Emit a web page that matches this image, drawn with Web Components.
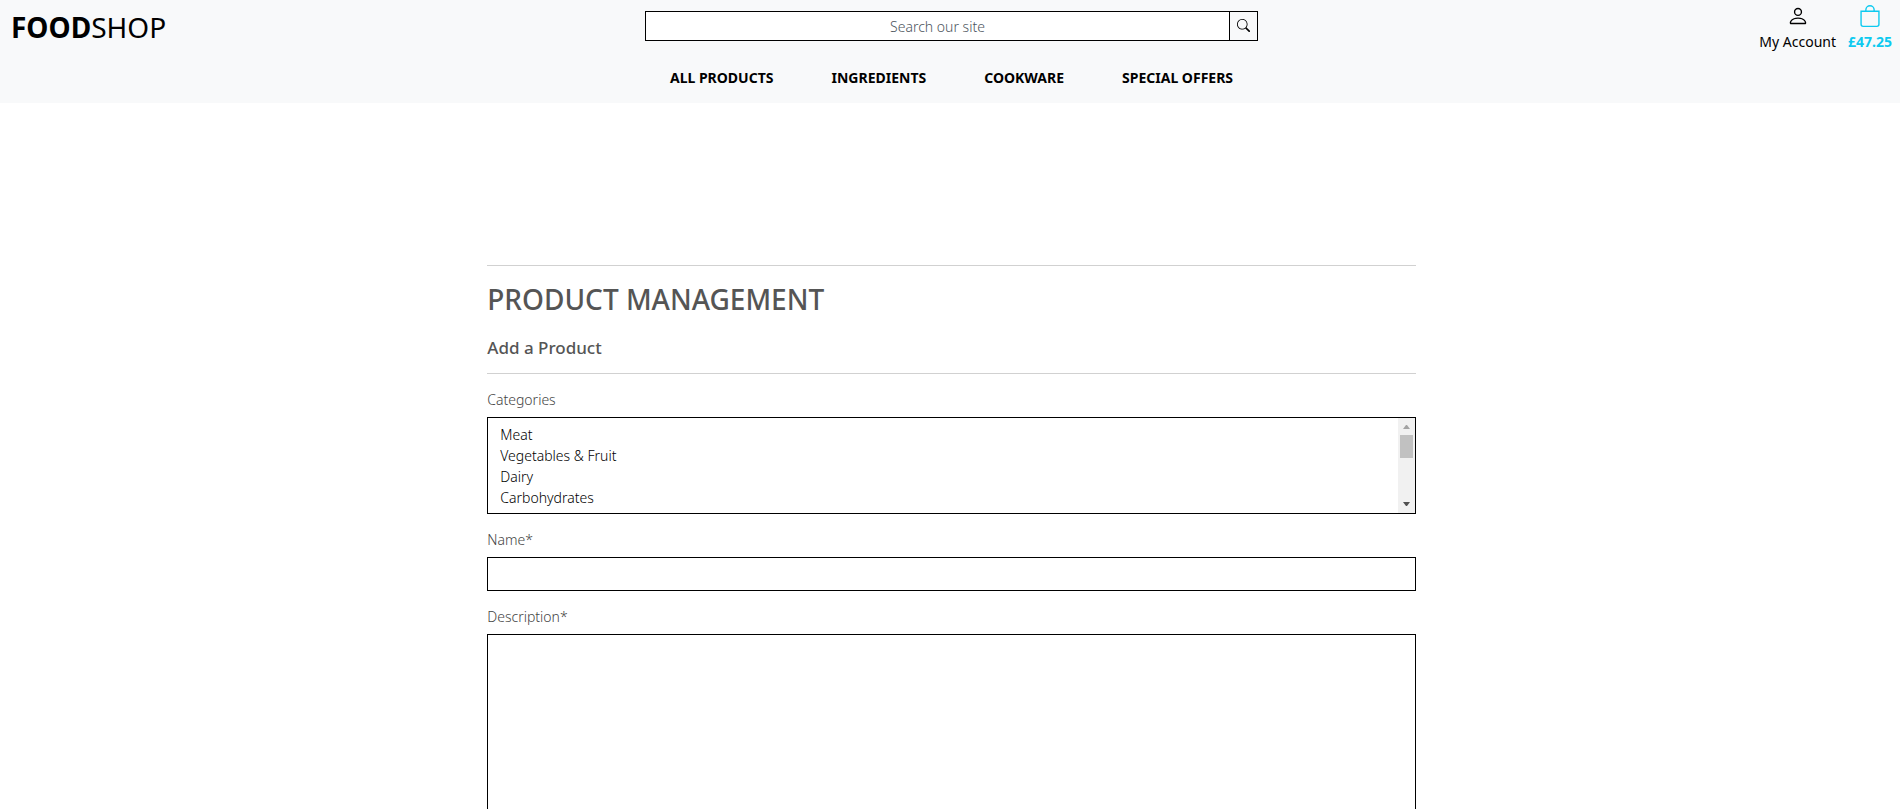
<!DOCTYPE html>
<html lang="en">
<head>
<meta charset="utf-8">
<title>Food Shop</title>
<style>
body { margin: 0; background: #fff; color: #555; font: 14px/21px "Noto Sans", "Open Sans", sans-serif; overflow-x: hidden; }
</style>
</head>
<body>
<site-header></site-header>
<product-page>
  <form-field label="Categories" kind="select"></form-field>
  <form-field label="Name*" kind="text"></form-field>
  <form-field label="Description*" kind="area"></form-field>
</product-page>

<script>
class SiteHeader extends HTMLElement {
  constructor() {
    super();
    this.attachShadow({ mode: "open" }).innerHTML = `
<style>
:host { display: block; background: #f8f9fa; color: #000; padding-bottom: 15px; }
* { box-sizing: border-box; }
a { color: inherit; text-decoration: none; }
.top { display: grid; grid-template-columns: 1fr 613px 1fr; padding: 0 8px 0 11px; height: 53px; }
.logo { font-size: 28px; line-height: 38px; padding-top: 8px; }
form { display: flex; height: 30px; margin-top: 11px; border: 1px solid #000; }
input { flex: 1; min-width: 0; border: 0; border-right: 1px solid #000; padding: 0; font: inherit; font-weight: 300; text-align: center; background: #fff; outline: 0; border-radius: 0; }
input::placeholder { color: #4c555d; opacity: 1; }
button { width: 27px; border: 0; padding: 0 0 2px; background: none; display: grid; place-items: center; }
.links { display: flex; justify-content: flex-end; gap: 12px; }
.links a { display: flex; flex-direction: column; align-items: center; }
.links svg { margin-top: 5px; margin-bottom: 4px; }
.bag { color: #0dcaf0; font-weight: 700; }
svg { display: block; fill: currentColor; }
nav { display: flex; justify-content: center; gap: 58px; padding: 14px 0 0 3px; font-weight: 700; }
</style>
<div class="top">
  <a class="logo" href="#"><b>FOOD</b>SHOP</a>
  <form><input type="text" aria-label="Search our site" placeholder="Search our site">
    <button type="button" aria-label="Search"><svg width="13" height="13" viewBox="0 0 16 16"><path d="M11.742 10.344a6.5 6.5 0 1 0-1.397 1.398h-.001c.03.04.062.078.098.115l3.850 3.850a1 1 0 0 0 1.415-1.414l-3.850-3.850a1.007 1.007 0 0 0-.115-.1zM12 6.5a5.5 5.5 0 1 1-11 0 5.5 5.5 0 0 1 11 0z"/></svg></button>
  </form>
  <div class="links">
    <a href="#"><svg width="22" height="22" viewBox="0 0 16 16"><path d="M8 8a3 3 0 1 0 0-6 3 3 0 0 0 0 6zm2-3a2 2 0 1 1-4 0 2 2 0 0 1 4 0zm4 8c0 1-1 1-1 1H3s-1 0-1-1 1-4 6-4 6 3 6 4zm-1-.004c-.001-.246-.154-.986-.832-1.664C11.516 10.68 10.289 10 8 10c-2.290 0-3.516.680-4.168 1.332-.678.678-.830 1.418-.832 1.664h10z"/></svg>My Account</a>
    <a class="bag" href="#"><svg width="22" height="22" viewBox="0 0 16 16"><path d="M8 1a2.500 2.500 0 0 1 2.500 2.500V4h-5v-.5A2.500 2.500 0 0 1 8 1zm3.500 3v-.5a3.500 3.500 0 1 0-7 0V4H1v10a2 2 0 0 0 2 2h10a2 2 0 0 0 2-2V4h-3.500zM2 5h12v9a1 1 0 0 1-1 1H3a1 1 0 0 1-1-1V5z"/></svg>£47.25</a>
  </div>
</div>
<nav><a href="#">ALL PRODUCTS</a><a href="#">INGREDIENTS</a><a href="#">COOKWARE</a><a href="#">SPECIAL OFFERS</a></nav>`;
  }
}

class ProductPage extends HTMLElement {
  constructor() {
    super();
    this.attachShadow({ mode: "open" }).innerHTML = `
<style>
:host { display: block; padding: 162px 0 0 3px; }
main { width: calc(50% - 20px); margin: 0 auto; }
hr { margin: 0; border: 0; border-top: 1px solid #d1d1d1; }
h1 { margin: 16px 0 8px; font-size: 28px; line-height: 34px; font-weight: 500; }
h2 { margin: 0 0 14px; padding-top: 13px; font-size: 17px; line-height: 22px; font-weight: 500; }
</style>
<main><hr><h1>PRODUCT MANAGEMENT</h1><h2>Add a Product</h2><hr><form><slot></slot></form></main>`;
  }
}

class FormField extends HTMLElement {
  constructor() {
    super();
    this.attachShadow({ mode: "open" });
  }
  connectedCallback() {
    const categories = ["Meat", "Vegetables & Fruit", "Dairy", "Carbohydrates", "Herbs & Spices", "Sauces", "Snacks", "Drinks", "Cookware", "Utensils", "Special Offers"];
    const controls = {
      select: `<select id="control" multiple>${categories.map(c => `<option>${c.replace("&", "&amp;")}</option>`).join("")}</select>
        <div class="bar" aria-hidden="true"><svg width="7" height="4"><path fill="#a3a3a3" d="M0 4h7L4 0H3z"/></svg><i></i><svg width="7" height="4"><path fill="#505050" d="M0 0h7L4 4H3z"/></svg></div>`,
      text: `<input id="control" type="text">`,
      area: `<textarea id="control" rows="10"></textarea>`
    };
    this.shadowRoot.innerHTML = `
<style>
:host { display: block; padding-top: 15px; font-weight: 300; color: #444; }
label { display: block; margin-bottom: 7px; }
.box { position: relative; }
select, input, textarea { display: block; box-sizing: border-box; width: 100%; margin: 0; border: 1px solid #000; border-radius: 0; background: #fff; color: #212529; font: inherit; padding: 6px 12px; outline: 0; resize: none; }
select { height: 97px; padding-top: 7px; overflow-y: scroll; scrollbar-width: none; }
option { padding: 0; min-height: 21px; line-height: 21px; font-weight: 300; color: #000; }
input { height: 34px; }
.bar { position: absolute; top: 1px; right: 1px; bottom: 1px; width: 17px; box-sizing: border-box; padding: 7px 0; background: #f1f1f1; display: flex; flex-direction: column; align-items: center; }
.bar i { width: 13px; height: 23px; margin: 6px 0 auto; background: #c1c1c1; }
.bar svg { display: block; }
</style>
<label for="control">${this.getAttribute("label")}</label><div class="box">${controls[this.getAttribute("kind")]}</div>`;
  }
}

customElements.define("site-header", SiteHeader);
customElements.define("product-page", ProductPage);
customElements.define("form-field", FormField);
</script>
</body>
</html>
